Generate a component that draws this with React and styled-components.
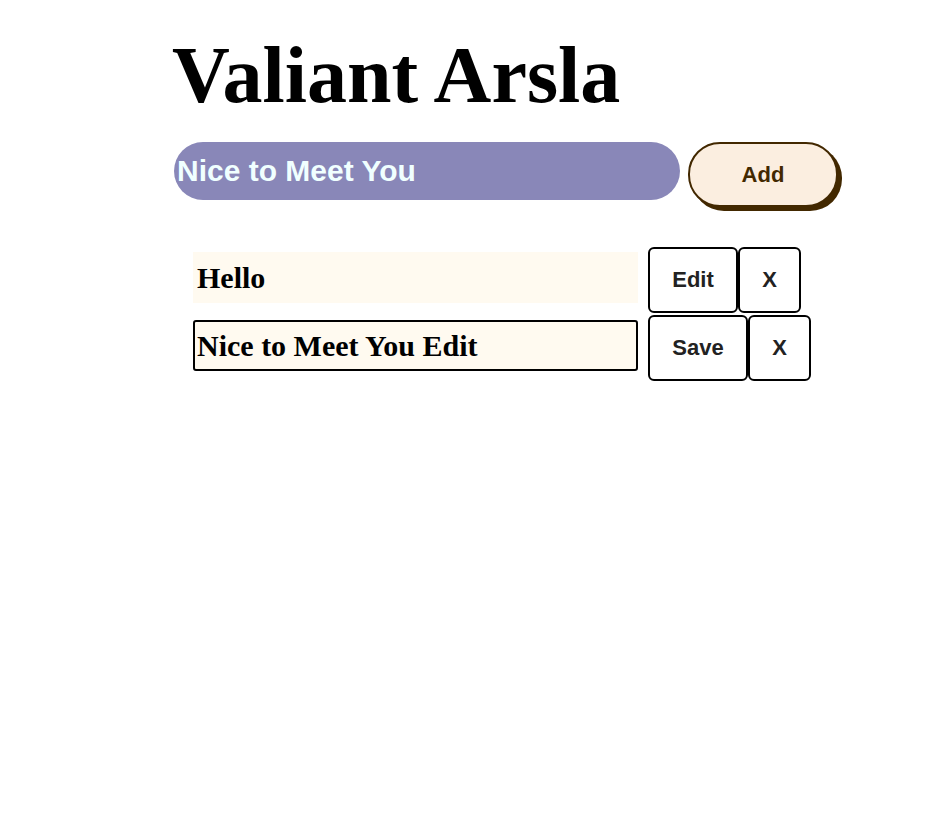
import React, { useState } from "react";
import styled, { createGlobalStyle } from "styled-components";

const GlobalStyle = createGlobalStyle`
  body {
    margin: 0;
    background: #ffffff;
    font-family: "Liberation Serif", "Times New Roman", serif;
  }
`;

const Page = styled.main`
  padding: 30px 0 0 172px;
`;

const Title = styled.h1`
  margin: 0;
  font-family: "Liberation Serif", "Times New Roman", serif;
  font-size: 80px;
  font-weight: 700;
  line-height: normal;
  color: #000;
`;

const Form = styled.form`
  display: flex;
  align-items: flex-start;
  gap: 8px;
  margin-top: 21px;
`;

const NewTodo = styled.input`
  box-sizing: border-box;
  width: 506px;
  height: 58px;
  margin-left: 2px;
  padding: 0 3px;
  border: none;
  border-radius: 29px;
  outline: none;
  background: #8987b8;
  color: #f0ffff;
  font-family: "Liberation Sans", Arial, sans-serif;
  font-size: 30px;
  font-weight: 700;
`;

const AddButton = styled.button`
  box-sizing: border-box;
  width: 150px;
  height: 65px;
  border: 2px solid #422800;
  border-radius: 32px;
  background: #fbeee0;
  box-shadow: #422800 4px 4px 0 0;
  color: #422800;
  font-family: "Liberation Sans", Arial, sans-serif;
  font-size: 22px;
  font-weight: 700;
  cursor: pointer;
`;

const List = styled.ul`
  list-style: none;
  margin: 40px 0 0;
  padding: 0 0 0 21px;
  display: flex;
  flex-direction: column;
  gap: 2px;
`;

const Item = styled.li`
  display: flex;
  align-items: flex-start;
`;

const Label = styled.div`
  box-sizing: border-box;
  width: 445px;
  height: 51px;
  margin: 5px 10px 0 0;
  padding: 0 4px;
  display: flex;
  align-items: center;
  background: #fffaf0;
  font-size: 30px;
  font-weight: 700;
  color: #000;
`;

const EditField = styled.input`
  box-sizing: border-box;
  width: 445px;
  height: 51px;
  margin: 5px 10px 0 0;
  padding: 0 2px;
  border: 2px solid #000;
  border-radius: 3px;
  outline: none;
  background: #fffaf0;
  caret-color: #000;
  font-family: "Liberation Serif", "Times New Roman", serif;
  font-size: 30px;
  font-weight: 700;
  color: #000;
`;

const ActionButton = styled.button`
  box-sizing: border-box;
  height: 66px;
  width: ${(props) => props.$width}px;
  padding: 0;
  border: 2px solid #000;
  border-radius: 6px;
  background: #fff;
  color: #222;
  font-family: "Liberation Sans", Arial, sans-serif;
  font-size: 22px;
  font-weight: 700;
  cursor: pointer;
`;

const initialTodos = [
  { id: 1, text: "Hello", editing: false },
  { id: 2, text: "Nice to Meet You Edit", editing: true },
];

export default () => {
  const [todos, setTodos] = useState(initialTodos);
  const [text, setText] = useState("Nice to Meet You");

  const handleSubmit = (e) => {
    e.preventDefault();
  };

  const setItemText = (id, value) => {
    setTodos(todos.map((t) => (t.id === id ? { ...t, text: value } : t)));
  };

  const toggleEdit = (id) => {
    setTodos(todos.map((t) => (t.id === id ? { ...t, editing: !t.editing } : t)));
  };

  const remove = (id) => {
    setTodos(todos.filter((t) => t.id !== id));
  };

  return (
    <>
      <GlobalStyle />
      <Page>
        <Title>Valiant Arsla</Title>
        <Form onSubmit={handleSubmit}>
          <NewTodo value={text} onChange={(e) => setText(e.target.value)} />
          <AddButton type="submit">Add</AddButton>
        </Form>
        <List>
          {todos.map((todo) => (
            <Item key={todo.id}>
              {todo.editing ? (
                <EditField
                  autoFocus
                  value={todo.text}
                  onChange={(e) => setItemText(todo.id, e.target.value)}
                />
              ) : (
                <Label>{todo.text}</Label>
              )}
              <ActionButton
                $width={todo.editing ? 100 : 90}
                onClick={() => toggleEdit(todo.id)}
              >
                {todo.editing ? "Save" : "Edit"}
              </ActionButton>
              <ActionButton $width={63} onClick={() => remove(todo.id)}>
                X
              </ActionButton>
            </Item>
          ))}
        </List>
      </Page>
    </>
  );
};
